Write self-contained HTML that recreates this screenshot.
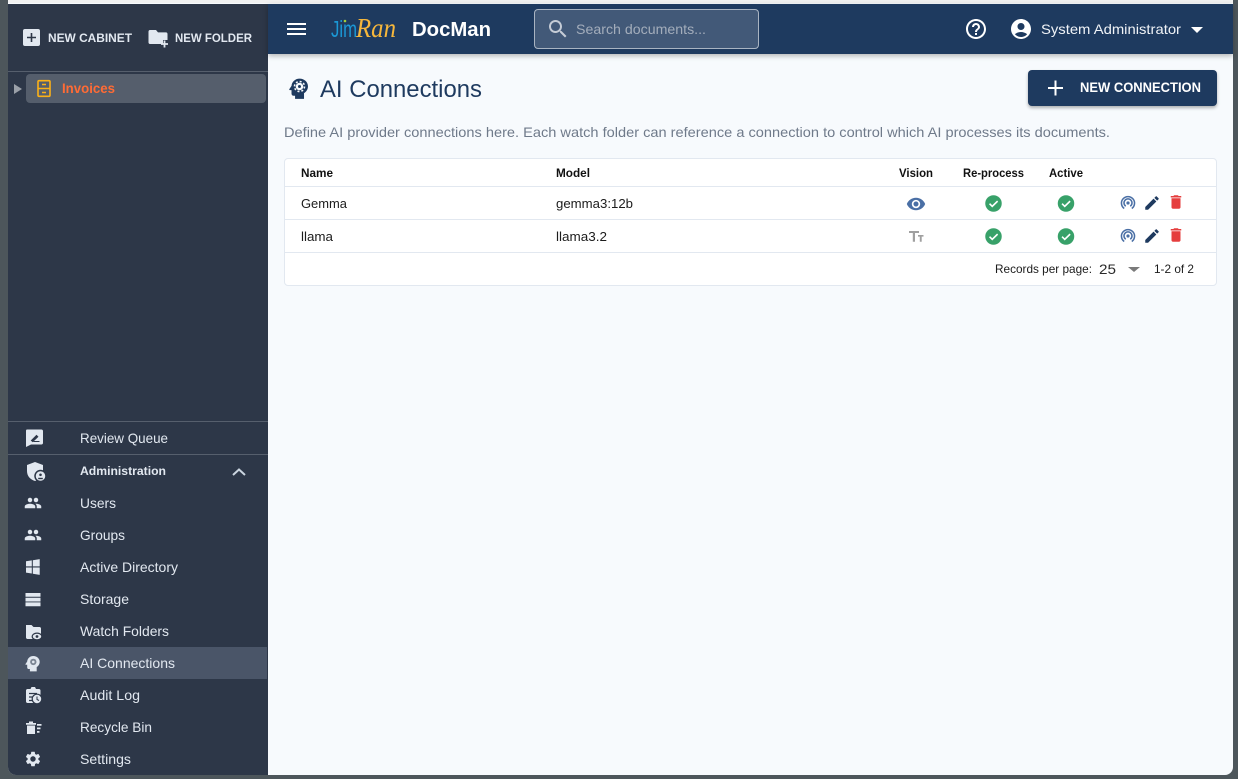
<!DOCTYPE html>
<html lang="en"><head><meta charset="utf-8"><title>DocMan - AI Connections</title>
<style>
html,body{margin:0;padding:0;width:1238px;height:779px;overflow:hidden;background:#4d565b;font-family:"Liberation Sans",sans-serif}
.b{position:absolute;box-sizing:border-box}
svg text{font-family:"Liberation Sans",sans-serif}
</style></head><body>
<div class="b" style="left:8px;top:0;width:1225px;height:4px;background:#f1f1f1"></div>
<div class="b" style="left:8px;top:3px;width:1225px;height:772px;background:#f7fafd;border-radius:0 0 8px 8px;overflow:hidden">
<div class="b" style="left:0;top:1px;width:260px;height:771px;background:#2d3748"></div>
</div>
<div class="b" style="left:268px;top:4px;width:965px;height:50px;background:#1e3a5f;box-shadow:0 2px 5px rgba(0,0,0,.28)"></div>
<div class="b" style="left:534px;top:9px;width:225px;height:40px;background:rgba(255,255,255,.16);border:1px solid rgba(255,255,255,.55);border-radius:4px"></div>
<div class="b" style="left:1028px;top:70px;width:189px;height:36px;background:#1e3a5f;border-radius:4px;box-shadow:0 2px 3px rgba(0,0,0,.3)"></div>
<div class="b" style="left:284px;top:158px;width:933px;height:128px;background:#fff;border:1px solid #e2e8f0;border-radius:4px"></div>
<div class="b" style="left:285px;top:186px;width:931px;height:1px;background:#e2e8f0"></div>
<div class="b" style="left:285px;top:219px;width:931px;height:1px;background:#e2e8f0"></div>
<div class="b" style="left:285px;top:252px;width:931px;height:1px;background:#e2e8f0"></div>
<div class="b" style="left:8px;top:71px;width:260px;height:1px;background:#565f6d"></div>
<div class="b" style="left:26px;top:74px;width:240px;height:29px;background:#555e6c;border-radius:4px"></div>
<div class="b" style="left:8px;top:421px;width:260px;height:1px;background:#565f6d"></div>
<div class="b" style="left:8px;top:454px;width:260px;height:1px;background:#565f6d"></div>
<div class="b" style="left:8px;top:647px;width:259px;height:32px;background:#4a5568"></div>

<svg class="b" style="left:0;top:0" width="1238" height="779" viewBox="0 0 1238 779" xmlns="http://www.w3.org/2000/svg">
<defs>
<symbol id="people" viewBox="0 0 24 24"><path d="M16 11c1.660 0 2.990-1.340 2.990-3S17.660 5 16 5c-1.660 0-3 1.340-3 3s1.340 3 3 3zm-8 0c1.660 0 2.990-1.340 2.990-3S9.660 5 8 5C6.340 5 5 6.340 5 8s1.340 3 3 3zm0 2c-2.330 0-7 1.170-7 3.500V19h14v-2.500c0-2.330-4.670-3.500-7-3.500zm8 0c-.29 0-.62.02-.97.05 1.160.84 1.970 1.970 1.970 3.450V19h6v-2.500c0-2.330-4.670-3.500-7-3.500z"/></symbol>
<symbol id="head" viewBox="0 0 24 24"><path d="M13 2.500C8.900 2.500 5.600 5.500 5.300 9.500L3.200 12.600c-.3.400 0 1 .5 1H5.300V17c0 1.100.9 2 2 2h1.400v3h8.600v-5.600c2.300-1.300 3.800-3.800 3.800-6.500 0-4.100-3.400-7.400-8.100-7.400z"/></symbol>
<symbol id="gear" viewBox="0 0 24 24"><circle cx="13" cy="10" r="3.700"/><circle cx="13" cy="10" r="5" fill="none" stroke-width="1.700" stroke-dasharray="1.960 1.967" style="stroke:inherit"/></symbol>
<symbol id="check" viewBox="0 0 24 24"><circle cx="12" cy="12" r="10.400" fill="#38a169"/><path d="M7 12.300l3.400 3.300L17.200 9" fill="none" stroke="#fff" stroke-width="2"/></symbol>
<symbol id="pod" viewBox="0 0 24 24"><g fill="none" stroke="#4a6fa5" stroke-width="2.300"><path d="M6.300 20.200A9.800 9.800 0 1 1 17.700 20.200"/><path d="M8.600 16.800A6 6 0 1 1 15.400 16.800"/></g><circle cx="12" cy="12" r="2.400" fill="#4a6fa5"/></symbol>
<symbol id="pen" viewBox="0 0 24 24"><path fill="#1e3a5f" d="M3 17.250V21h3.750L17.810 9.940l-3.750-3.750L3 17.250zM20.710 7.040c.39-.39.39-1.020 0-1.410l-2.340-2.340c-.39-.39-1.020-.39-1.410 0l-1.830 1.830 3.750 3.750 1.830-1.830z"/></symbol>
<symbol id="trash" viewBox="0 0 24 24"><path fill="#e53e3e" d="M6 19c0 1.100.9 2 2 2h8c1.100 0 2-.9 2-2V7H6v12zM19 4h-3.500l-1-1h-5l-1 1H5v2h14V4z"/></symbol>
</defs>

<!-- sidebar top -->
<rect x="23" y="29" width="17" height="17" rx="2" fill="#e2e8f0"/>
<path d="M31.500 33v9M27 37.500h9" stroke="#2d3748" stroke-width="1.600"/>
<text x="48" y="42" font-size="12" font-weight="700" fill="#e2e8f0" textLength="84" lengthAdjust="spacingAndGlyphs">NEW CABINET</text>
<path d="M150 30h6l2 2.400h8c1 0 1.500.7 1.500 1.600v6h-4.500v4h-13c-1 0-1.500-.7-1.500-1.600V31.600c0-.9.5-1.600 1.500-1.600z" fill="#e2e8f0"/>
<path d="M164.500 40.500v7M161 44h7" stroke="#e2e8f0" stroke-width="1.800"/>
<text x="175" y="42" font-size="12" font-weight="700" fill="#e2e8f0" textLength="77" lengthAdjust="spacingAndGlyphs">NEW FOLDER</text>
<path d="M14 84l8 5-8 5z" fill="#9aa0a8"/>
<rect x="38" y="80.700" width="12" height="15.600" rx="1" fill="none" stroke="#fbb117" stroke-width="1.600"/>
<path d="M38 88.500h12M42 84.500h4M42 92.500h4" stroke="#fbb117" stroke-width="1.400"/>
<text x="62" y="93" font-size="14" font-weight="700" fill="#ff6b35" textLength="53" lengthAdjust="spacingAndGlyphs">Invoices</text>

<!-- sidebar nav -->
<g fill="#e2e8f0" font-size="14">
<text x="80" y="443" textLength="88" lengthAdjust="spacingAndGlyphs">Review Queue</text>
<text x="80" y="475" font-size="12" font-weight="700" textLength="86" lengthAdjust="spacingAndGlyphs">Administration</text>
<text x="80" y="508" textLength="36" lengthAdjust="spacingAndGlyphs">Users</text>
<text x="80" y="540" textLength="45" lengthAdjust="spacingAndGlyphs">Groups</text>
<text x="80" y="572" textLength="98" lengthAdjust="spacingAndGlyphs">Active Directory</text>
<text x="80" y="604" textLength="49" lengthAdjust="spacingAndGlyphs">Storage</text>
<text x="80" y="636" textLength="89" lengthAdjust="spacingAndGlyphs">Watch Folders</text>
<text x="80" y="668" textLength="95" lengthAdjust="spacingAndGlyphs">AI Connections</text>
<text x="80" y="700" textLength="60" lengthAdjust="spacingAndGlyphs">Audit Log</text>
<text x="80" y="732" textLength="72" lengthAdjust="spacingAndGlyphs">Recycle Bin</text>
<text x="80" y="764" textLength="51" lengthAdjust="spacingAndGlyphs">Settings</text>
</g>
<path d="M233 475l6-5.500 6 5.500" fill="none" stroke="#cbd5e0" stroke-width="2"/>
<g fill="#e2e8f0">
<!-- review -->
<path d="M27 429.500h14.500c.8 0 1.500.7 1.500 1.500v12c0 .8-.7 1.500-1.500 1.500H31l-5 2.500V431c0-.8.2-1.500 1-1.500z"/>
<path d="M31.500 440.500l5-5 1.200 1.200-5 4.800zM33.500 441.500h6" stroke="#2d3748" stroke-width="1.100" fill="#2d3748"/>
<!-- shield -->
<path d="M35 462l8 3v6c0 5-3.200 8.500-8 10-4.800-1.500-8-5-8-10v-6z"/>
<circle cx="40.500" cy="476" r="5.500" fill="#e2e8f0" stroke="#2d3748" stroke-width="1.500"/>
<circle cx="40.500" cy="474.800" r="1.300" fill="#2d3748"/><path d="M38.200 478.500h4.600" stroke="#2d3748" stroke-width="1.400"/>
<use href="#people" x="24" y="494" width="18" height="18"/>
<use href="#people" x="24" y="526" width="18" height="18"/>
<!-- windows -->
<path d="M26 561.300l5.800-.9v6h-5.800zM32.800 560.200l6.900-1.100v7.300h-6.900zM26 567.500h5.800v6l-5.800-.9zM32.800 567.500h6.900v7.400l-6.900-1.100z"/>
<!-- storage -->
<path d="M25.500 593h15v3.800h-15zM25.500 597.700h15v3.800h-15zM25.500 602.400h15v3.800h-15z"/>
<!-- watch folder -->
<path d="M26 625h5.500l2 2h6c.8 0 1.500.7 1.500 1.500v10.500H27.500c-.8 0-1.500-.7-1.500-1.500z"/>
<ellipse cx="37" cy="636.500" rx="4.800" ry="3.400" fill="#e2e8f0" stroke="#2d3748" stroke-width="1.200"/><circle cx="37" cy="636.500" r="1.400" fill="#2d3748"/>
<!-- head -->
<use href="#head" x="23" y="654" width="19" height="19"/>
<circle cx="33.300" cy="661.900" r="3.200" fill="#7c8694"/>
<circle cx="33.300" cy="661.900" r="1.300" fill="#e2e8f0"/>
<!-- audit -->
<path d="M27.500 689h3l1-2h3.500l1 2h3c.8 0 1.500.7 1.500 1.500v12.500H27.500c-.8 0-1.500-.7-1.500-1.500v-11c0-.8.7-1.500 1.500-1.500z"/>
<path d="M29 693.500h8M29 697h4M29 700.500h3" stroke="#2d3748" stroke-width="1.200"/>
<circle cx="37" cy="699" r="4.800" fill="#e2e8f0" stroke="#2d3748" stroke-width="1.200"/><path d="M37 696.500v3l2 1" fill="none" stroke="#2d3748" stroke-width="1"/>
<!-- recycle -->
<path d="M26 723h10v1.800H26zM29 721.500h4v1.500h-4zM27 725.500h8V734h-8zM37 724h4.500v1.800H37zM37 727.500h3.500v1.800H37zM37 731h2.500v1.800H37z"/>
<!-- gear -->
<svg x="24" y="750" width="18" height="18" viewBox="0 0 24 24"><path d="M19.140 12.940c.04-.3.06-.61.06-.94 0-.32-.02-.64-.07-.94l2.030-1.580c.18-.14.23-.41.12-.61l-1.920-3.320c-.12-.22-.37-.29-.59-.22l-2.390.96c-.5-.38-1.030-.7-1.620-.94l-.36-2.540c-.04-.24-.24-.41-.48-.41h-3.840c-.24 0-.43.17-.47.41l-.36 2.540c-.59.24-1.130.57-1.620.94l-2.390-.96c-.22-.08-.47 0-.59.22L2.740 8.870c-.12.21-.08.47.12.61l2.030 1.580c-.05.3-.09.63-.09.94s.02.64.07.94l-2.030 1.580c-.18.14-.23.41-.12.61l1.920 3.320c.12.22.37.29.59.22l2.390-.96c.5.38 1.030.7 1.620.94l.36 2.540c.05.24.24.41.48.41h3.840c.24 0 .44-.17.47-.41l.36-2.540c.59-.24 1.130-.56 1.620-.94l2.390.96c.22.08.47 0 .59-.22l1.920-3.320c.12-.22.07-.47-.12-.61l-2.010-1.580zM12 15.600c-1.980 0-3.600-1.620-3.600-3.600s1.620-3.600 3.600-3.600 3.600 1.620 3.600 3.600-1.620 3.600-3.600 3.600z"/></svg>
</g>

<!-- header -->
<path d="M287 23h19v2h-19zM287 28h19v2h-19zM287 33h19v2h-19z" fill="#fff"/>
<text x="331" y="37" font-size="23" fill="#1b98d5" textLength="26" lengthAdjust="spacingAndGlyphs">Jim</text>
<circle cx="345" cy="21" r="1.300" fill="#a6ce39"/>
<text x="356" y="37" font-size="27" fill="#f6b73c" font-style="italic" textLength="40" lengthAdjust="spacingAndGlyphs" style="font-family:'Liberation Serif',serif">Ran</text>
<text x="412" y="36" font-size="20" font-weight="700" fill="#fff" textLength="79" lengthAdjust="spacingAndGlyphs">DocMan</text>
<svg x="546" y="17" width="24" height="24" viewBox="0 0 24 24"><path fill="#c5ccd6" d="M15.500 14h-.79l-.28-.27C15.410 12.590 16 11.110 16 9.500 16 5.910 13.090 3 9.500 3S3 5.910 3 9.500 5.910 16 9.500 16c1.610 0 3.090-.59 4.230-1.570l.27.28v.79l5 4.990L20.490 19l-4.990-5zm-6 0C7.010 14 5 11.990 5 9.500S7.010 5 9.500 5 14 7.010 14 9.500 11.990 14 9.500 14z"/></svg>
<text x="576" y="34" font-size="14" fill="#a3adbb" textLength="130" lengthAdjust="spacingAndGlyphs">Search documents...</text>
<svg x="964" y="17" width="24" height="24" viewBox="0 0 24 24"><path fill="#fff" d="M11 18h2v-2h-2v2zm1-16C6.480 2 2 6.480 2 12s4.480 10 10 10 10-4.480 10-10S17.520 2 12 2zm0 18c-4.410 0-8-3.590-8-8s3.590-8 8-8 8 3.590 8 8-3.590 8-8 8zm0-14c-2.210 0-4 1.790-4 4h2c0-1.100.9-2 2-2s2 .9 2 2c0 2-3 1.750-3 5h2c0-2.250 3-2.500 3-5 0-2.210-1.790-4-4-4z"/></svg>
<svg x="1009" y="17" width="24" height="24" viewBox="0 0 24 24"><path fill="#fff" d="M12 2C6.480 2 2 6.480 2 12s4.480 10 10 10 10-4.480 10-10S17.520 2 12 2zm0 4c1.930 0 3.500 1.570 3.500 3.500S13.930 13 12 13s-3.500-1.570-3.500-3.500S10.070 6 12 6zm0 14c-2.030 0-4.430-.82-6.140-2.880C7.550 15.800 9.680 15 12 15s4.450.8 6.140 2.120C16.430 19.180 14.030 20 12 20z"/></svg>
<text x="1041" y="34" font-size="14" fill="#f0f3f7" textLength="140" lengthAdjust="spacingAndGlyphs">System Administrator</text>
<path d="M1191 27h12l-6 6z" fill="#fff"/>

<!-- title -->
<use href="#head" x="286" y="76" width="25" height="25" fill="#1e3a5f"/>
<circle cx="299.500" cy="86.500" r="3.800" fill="#f7fafd"/>
<circle cx="299.500" cy="86.500" r="5" fill="none" stroke="#f7fafd" stroke-width="1.600" stroke-dasharray="1.960 1.967"/>
<circle cx="299.500" cy="86.500" r="1.500" fill="#1e3a5f"/>
<text x="320" y="97" font-size="24" fill="#1e3a5f" textLength="162" lengthAdjust="spacingAndGlyphs">AI Connections</text>
<path d="M1055.500 80.500v15M1048 88h15" stroke="#fff" stroke-width="2"/>
<text x="1080" y="92" font-size="14" font-weight="700" fill="#fff" textLength="121" lengthAdjust="spacingAndGlyphs">NEW CONNECTION</text>
<text x="284" y="137" font-size="14" fill="#6f7a8a" textLength="826" lengthAdjust="spacingAndGlyphs">Define AI provider connections here. Each watch folder can reference a connection to control which AI processes its documents.</text>

<!-- table -->
<g font-size="12" font-weight="700" fill="#111">
<text x="301" y="177" textLength="32" lengthAdjust="spacingAndGlyphs">Name</text>
<text x="556" y="177" textLength="34" lengthAdjust="spacingAndGlyphs">Model</text>
<text x="899" y="177" textLength="34" lengthAdjust="spacingAndGlyphs">Vision</text>
<text x="963" y="177" textLength="61" lengthAdjust="spacingAndGlyphs">Re-process</text>
<text x="1049" y="177" textLength="34" lengthAdjust="spacingAndGlyphs">Active</text>
</g>
<g font-size="13" fill="#1c1c1c">
<text x="301" y="208" textLength="46" lengthAdjust="spacingAndGlyphs">Gemma</text>
<text x="556" y="208" textLength="77" lengthAdjust="spacingAndGlyphs">gemma3:12b</text>
<text x="301" y="241" textLength="32" lengthAdjust="spacingAndGlyphs">llama</text>
<text x="556" y="241" textLength="51" lengthAdjust="spacingAndGlyphs">llama3.2</text>
</g>
<svg x="906" y="194" width="20" height="20" viewBox="0 0 24 24"><path fill="#4a6fa5" d="M12 4.500C7 4.500 2.730 7.610 1 12c1.730 4.390 6 7.500 11 7.500s9.270-3.110 11-7.500c-1.730-4.390-6-7.500-11-7.500zM12 17c-2.760 0-5-2.240-5-5s2.240-5 5-5 5 2.240 5 5-2.240 5-5 5zm0-8c-1.660 0-3 1.340-3 3s1.340 3 3 3 3-1.340 3-3-1.340-3-3-3z"/></svg>
<path d="M909 231h10v2h-4v8.700h-2.200V233H909zM918 235h5.500v1.600h-1.800v5.100h-1.900v-5.100H918z" fill="#a0a0a0"/>
<use href="#check" x="984" y="194" width="19" height="19"/>
<use href="#check" x="1056.500" y="194" width="19" height="19"/>
<use href="#check" x="984" y="227" width="19" height="19"/>
<use href="#check" x="1056.500" y="227" width="19" height="19"/>
<use href="#pod" x="1120" y="195" width="16" height="16"/>
<use href="#pen" x="1143" y="194" width="18" height="18"/>
<use href="#trash" x="1167" y="193" width="18" height="18"/>
<use href="#pod" x="1120" y="228" width="16" height="16"/>
<use href="#pen" x="1143" y="227" width="18" height="18"/>
<use href="#trash" x="1167" y="226" width="18" height="18"/>
<text x="995" y="273" font-size="12" fill="#1c1c1c" textLength="97" lengthAdjust="spacingAndGlyphs">Records per page:</text>
<text x="1099" y="274" font-size="14" fill="#2a2a2a" textLength="17" lengthAdjust="spacingAndGlyphs">25</text>
<path d="M1128 267h12l-6 5z" fill="#7a7a7a"/>
<text x="1154" y="273" font-size="12" fill="#1c1c1c" textLength="40" lengthAdjust="spacingAndGlyphs">1-2 of 2</text>
</svg>
</body></html>
